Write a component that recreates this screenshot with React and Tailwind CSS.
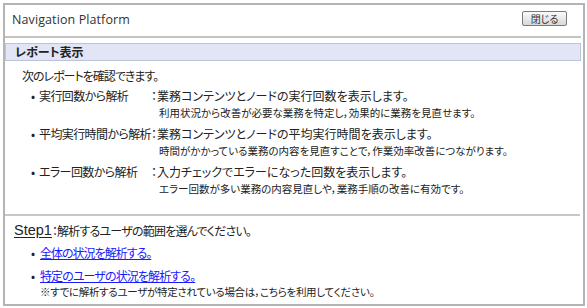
import React from "react";

const jp = "font-['MS_PGothic','Noto_Sans_CJK_JP',sans-serif] [font-feature-settings:'palt']";

function Item({ label, desc, sub }) {
  return (
    <div className="flex items-start">
      <span className="w-[8px] text-[12px] leading-[17px] shrink-0">•</span>
      <span className="w-[112px] shrink-0 text-[12px] leading-[17px] whitespace-nowrap tracking-[-0.6px]">{label}</span>
      <div className="flex flex-col">
        <span className="text-[12px] leading-[17px] whitespace-nowrap">：{desc}</span>
        <span className="pl-[8px] text-[10.5px] leading-[17px] whitespace-nowrap">{sub}</span>
      </div>
    </div>
  );
}

export default function App() {
  return (
    <div className={`w-[587px] h-[308px] bg-white pt-[3px] pl-[3px] pr-[2px] pb-[2px] text-[#222] ${jp}`}>
      <div className="w-[582px] h-[303px] border-2 border-[#b4b4b4] flex flex-col">
        {/* header */}
        <div className="h-[33px] flex items-center justify-between pl-[7px] pr-[14px] mr-[2px] border-b-2 border-[#c4c4c4]">
          <span className="font-['Open_Sans',sans-serif] text-[12.5px] text-[#333] tracking-[0.1px] mt-[-1px]">Navigation Platform</span>
          <button className="w-[45px] h-[15px] border border-[#7a7a7a] rounded-[2px] bg-gradient-to-b from-[#fbfbfb] to-[#d8d8d8] text-[10px] leading-[13px] text-[#333] mt-[-5px]">閉じる</button>
        </div>
        {/* section bar */}
        <div className="mt-[5px] mr-[2px] h-[18px] bg-[#e1e5f5] border border-[#bcc3d9] flex items-center pl-[9px]">
          <span className="text-[12px] font-bold text-[#222]">レポート表示</span>
        </div>
        {/* body */}
        <div className="pl-[17px] pt-[6px]">
          <div className="text-[12px] leading-[17px] tracking-[-1px]">次のレポートを確認できます。</div>
          <div className="pl-[9px] pt-[3px] flex flex-col gap-[4px]">
            <Item label="実行回数から解析" desc="業務コンテンツとノードの実行回数を表示します。" sub="利用状況から改善が必要な業務を特定し，効果的に業務を見直せます。" />
            <Item label="平均実行時間から解析" desc="業務コンテンツとノードの平均実行時間を表示します。" sub="時間がかかっている業務の内容を見直すことで，作業効率改善につながります。" />
            <Item label="エラー回数から解析" desc="入力チェックでエラーになった回数を表示します。" sub="エラー回数が多い業務の内容見直しや，業務手順の改善に有効です。" />
          </div>
        </div>
        <div className="mt-[17px] mr-[3px] border-b-2 border-[#c8c8c8]" />
        <div className="pl-[9px] pt-[3px]">
          <div className="flex items-end h-[20px]">
            <span className="font-['Liberation_Sans',sans-serif] text-[14.5px] underline underline-offset-2 leading-[18px]">Step1</span>
            <span className="text-[12px] leading-[17px] tracking-[-0.8px]">：解析するユーザの範囲を選んでください。</span>
          </div>
          <div className="pl-[17px] pt-[5px] flex flex-col gap-[6px]">
            <div className="flex">
              <span className="w-[9px] text-[12px] leading-[17px]">•</span>
              <a href="#" className="text-[12px] leading-[17px] text-[#1a1aff] underline tracking-[-1px]">全体の状況を解析する。</a>
            </div>
            <div className="flex flex-col">
              <div className="flex">
                <span className="w-[9px] text-[12px] leading-[17px]">•</span>
                <a href="#" className="text-[12px] leading-[17px] text-[#1a1aff] underline tracking-[-0.9px]">特定のユーザの状況を解析する。</a>
              </div>
              <span className="pl-[9px] text-[10.5px] leading-[15px] tracking-[-0.3px]">※すでに解析するユーザが特定されている場合は，こちらを利用してください。</span>
            </div>
          </div>
        </div>
      </div>
    </div>
  );
}
